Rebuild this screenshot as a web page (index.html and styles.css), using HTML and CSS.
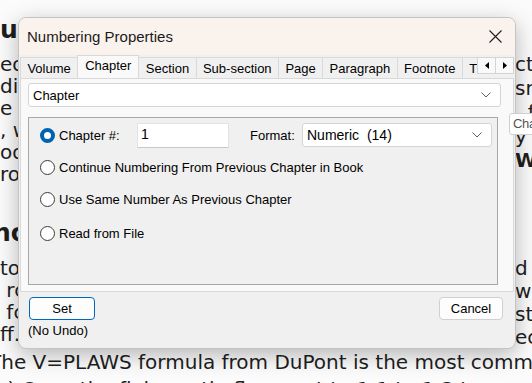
FILE: index.html
```html
<!DOCTYPE html>
<html lang="en">
<head>
    <meta charset="UTF-8">
    <title>Numbering Properties</title>
    <link rel="stylesheet" href="styles.css">
</head>
<body>
    <div class="doc">
        <div class="cols">
            <div class="col-left">
                <h1 class="doc-head">us</h1>
                <div class="doc-para first">
                    <div>ed to</div>
                    <div>di the</div>
                    <div>e of</div>
                    <div>, w ith</div>
                    <div>od and</div>
                    <div>rol the</div>
                </div>
                <h1 class="doc-head no">no</h1>
                <div class="doc-para">
                    <div>to the</div>
                    <div>&nbsp;rc ion</div>
                    <div>&nbsp;fc and</div>
                    <div>ff. The</div>
                </div>
            </div>
            <div class="col-right">
                <div class="doc-para wide first">
                    <div>ct</div>
                    <div>sn</div>
                    <div>, f</div>
                    <div>y c</div>
                    <div><b>W</b></div>
                </div>
                <div class="doc-para mid">
                    <div>d</div>
                    <div>w</div>
                    <div>st</div>
                    <div>ec</div>
                </div>
            </div>
        </div>
        <div class="doc-para full">
            <div>The V=PLAWS formula from DuPont is the most common</div>
            <div class="cut">&nbsp;a) Once the fixing ratio flows out to 1:1 to 1:2 to</div>
        </div>
    </div>

    <div class="dialog">
        <div class="titlebar">
            <span class="title">Numbering Properties</span>
            <svg class="close" width="13" height="13" viewBox="0 0 13 13">
                <path d="M0.5 0.5 L12.5 12.5 M12.5 0.5 L0.5 12.5" stroke="#1f1f1f" stroke-width="1.1" fill="none"/>
            </svg>
        </div>

        <div class="tabstrip">
            <div class="tabs">
                <span class="tab">Volume</span>
                <span class="tab active">Chapter</span>
                <span class="tab">Section</span>
                <span class="tab">Sub-section</span>
                <span class="tab">Page</span>
                <span class="tab">Paragraph</span>
                <span class="tab">Footnote</span>
                <span class="tab">TOC</span>
            </div>
            <div class="tab-scroll">
                <span class="arrow">
                    <svg width="4" height="7" viewBox="0 0 4 7"><path d="M4 0 L0 3.5 L4 7 Z" fill="#000"/></svg>
                </span>
                <span class="arrow">
                    <svg width="4" height="7" viewBox="0 0 4 7"><path d="M0 0 L4 3.5 L0 7 Z" fill="#000"/></svg>
                </span>
            </div>
        </div>

        <div class="panel">
            <div class="combo main-combo">
                <span>Chapter</span>
                <svg class="chev" width="10" height="6" viewBox="0 0 10 6"><path d="M0.5 0.5 L5 5 L9.5 0.5" stroke="#5f5f5f" stroke-width="1" fill="none"/></svg>
            </div>

            <div class="group">
                <div class="row row-number">
                    <span class="radio checked"></span>
                    <span class="label num-label">Chapter #:</span>
                    <div class="textbox">1</div>
                    <span class="label fmt-label">Format:</span>
                    <div class="combo fmt-combo">
                        <span>Numeric&nbsp; (14)</span>
                        <svg class="chev" width="10" height="6" viewBox="0 0 10 6"><path d="M0.5 0.5 L5 5 L9.5 0.5" stroke="#5f5f5f" stroke-width="1" fill="none"/></svg>
                    </div>
                </div>
                <div class="row row-continue">
                    <span class="radio"></span>
                    <span class="label">Continue Numbering From Previous Chapter in Book</span>
                </div>
                <div class="row row-same">
                    <span class="radio"></span>
                    <span class="label">Use Same Number As Previous Chapter</span>
                </div>
                <div class="row row-file">
                    <span class="radio"></span>
                    <span class="label">Read from File</span>
                </div>
            </div>
        </div>

        <div class="footer">
            <div class="set-col">
                <button class="btn default">Set</button>
                <div class="note">(No Undo)</div>
            </div>
            <button class="btn">Cancel</button>
        </div>
    </div>

    <div class="tooltip">Chapter</div>
</body>
</html>
```

FILE: styles.css
```css
body {
    margin: 0;
    width: 532px;
    height: 383px;
    overflow: hidden;
    position: relative;
    background-color: #fbfbfb;
    font-family: "Liberation Sans", Arial, sans-serif;
}

/* document behind the dialog */
.doc {
    font-family: "DejaVu Sans", Verdana, sans-serif;
    font-size: 20px;
    line-height: 22px;
    color: #1e1e1e;
    white-space: nowrap;
}
.cols {
    display: flex;
    height: 351px;
}
.col-left {
    width: 515px;
    flex: none;
    overflow: hidden;
}
.col-right {
    flex: none;
}
.doc-head {
    margin: 16px 0 0 0;
    font-size: 25px;
    line-height: 28px;
    font-weight: bold;
}
.doc-head.no {
    margin-top: 34px;
    text-indent: -7px;
}
.doc-para.first {
    margin-top: 9px;
}
.col-left .doc-para + .doc-head + .doc-para {
    margin-top: 10px;
}
.doc-para.wide {
    margin-top: 52px;
    line-height: 24px;
}
.doc-para.mid {
    margin-top: 85px;
    line-height: 23px;
}
.doc-para.full {
    text-indent: -11px;
}
.doc-para .cut {
    margin-top: 5px;
}

/* dialog window */
.dialog {
    position: absolute;
    left: 18px;
    top: 17px;
    width: 498px;
    height: 332px;
    box-sizing: border-box;
    border: 1px solid #c4c4c4;
    border-radius: 8px;
    background-color: #f0f0f0;
    box-shadow: 0 6px 22px rgba(0, 0, 0, 0.28);
    overflow: hidden;
    font-size: 13px;
    color: #000;
}
.titlebar {
    height: 37px;
    display: flex;
    align-items: center;
    padding-left: 8px;
    background-color: #faf2ed;
}
.title {
    font-size: 15px;
    color: #1a1a1a;
    flex: 1;
}
.close {
    margin-right: 13px;
}

.tabstrip {
    height: 23px;
    display: flex;
    align-items: flex-start;
    margin: 0 1px;
}
.tabs {
    flex: 1;
    display: flex;
    align-items: flex-end;
    height: 23px;
    overflow: hidden;
    white-space: nowrap;
}
.tab {
    height: 21px;
    line-height: 21px;
    padding: 0 6.4px;
    box-sizing: border-box;
    border: 1px solid #d9d9d9;
    border-bottom: none;
    margin-right: -1px;
    background-color: #f0f0f0;
}
.tab.active {
    height: 23px;
    line-height: 19px;
    padding: 0 7px;
    background-color: #f9f9f9;
    position: relative;
    z-index: 1;
}
.tab-scroll {
    display: flex;
    margin-top: 2px;
    border: 1px solid #d4d4d4;
    background-color: #f9f9f9;
}
.arrow {
    width: 17px;
    height: 15px;
    display: flex;
    align-items: center;
    justify-content: center;
}
.arrow + .arrow {
    border-left: 1px solid #d4d4d4;
}

.panel {
    margin: 0 1px;
    height: 214px;
    box-sizing: border-box;
    border: 1px solid #d9d9d9;
    background-color: #f9f9f9;
    padding: 4px 0 0 7px;
}
.combo {
    display: flex;
    align-items: center;
    box-sizing: border-box;
    height: 24px;
    padding: 0 9px 0 4px;
    background-color: #fff;
    border: 1px solid #d4d4d4;
    border-radius: 3px;
}
.combo span {
    flex: 1;
}
.main-combo {
    width: 473px;
}
.group {
    margin-top: 10px;
    width: 470px;
    height: 168px;
    box-sizing: border-box;
    border: 1px solid #a8a8a8;
    background-color: #f0f0f0;
    padding: 5px 0 0 11px;
}
.row {
    display: flex;
    align-items: center;
    height: 20px;
}
.row-number {
    height: 25px;
}
.row-continue {
    margin-top: 9px;
}
.row-same {
    margin-top: 12px;
}
.row-file {
    margin-top: 14px;
}
.radio {
    width: 15px;
    height: 15px;
    box-sizing: border-box;
    border: 1px solid #3c3c3c;
    border-radius: 50%;
    background-color: #fff;
    margin-right: 4px;
    flex: none;
}
.radio.checked {
    border: 4px solid #0063b1;
    background-color: #fff;
}
.num-label {
    width: 78px;
}
.textbox {
    width: 92px;
    height: 25px;
    box-sizing: border-box;
    background-color: #fff;
    border: 1px solid #e3e3e3;
    border-bottom-color: #c8c8c8;
    padding: 2px 0 0 3px;
    font-size: 14px;
}
.fmt-label {
    margin-left: 21px;
    width: 52px;
}
.fmt-combo {
    width: 190px;
    font-size: 14px;
    margin-top: -1px;
}

.footer {
    display: flex;
    justify-content: space-between;
    align-items: flex-start;
    padding: 5px 12px 0 9px;
}
.btn {
    height: 23px;
    padding: 0;
    font-family: "Liberation Sans", Arial, sans-serif;
    font-size: 13px;
    color: #000;
    background-color: #fdfdfd;
    border: 1px solid #d0d0d0;
    border-radius: 4px;
    width: 64px;
}
.btn.default {
    width: 66px;
    border-color: #0067c0;
    margin-left: 1px;
}
.note {
    margin-top: 3px;
    line-height: 16px;
}

.tooltip {
    position: absolute;
    left: 509px;
    top: 113px;
    height: 20px;
    line-height: 20px;
    padding: 0 2px 0 3px;
    background-color: #fff;
    border: 1px solid #cfcfcf;
    border-radius: 3px;
    color: #555;
    font-size: 13px;
    letter-spacing: -0.3px;
    white-space: nowrap;
}
```
